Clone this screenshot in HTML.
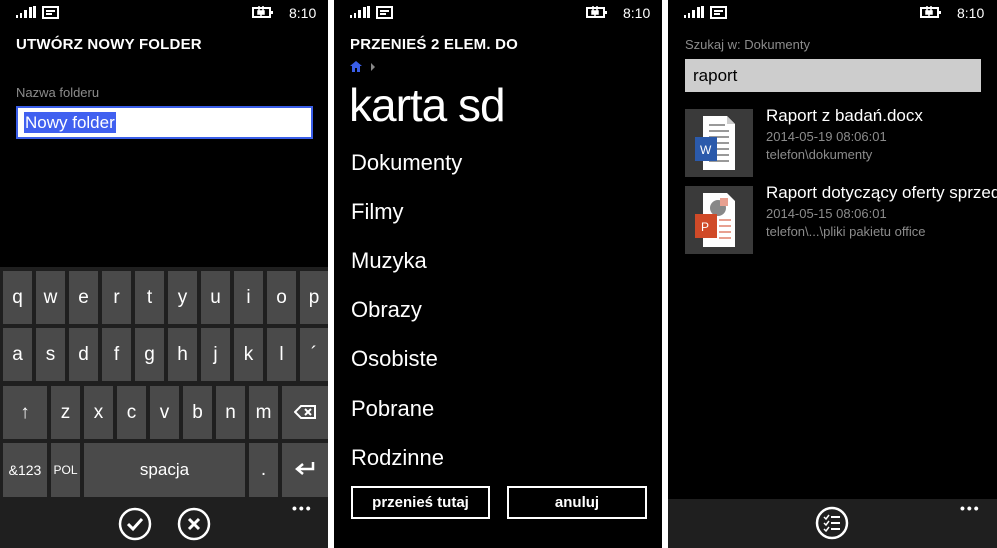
<!DOCTYPE html>
<html><head><meta charset="utf-8"><style>
*{margin:0;padding:0;box-sizing:border-box}
body{width:997px;height:548px;background:#fff;position:relative;overflow:hidden;font-family:"Liberation Sans",sans-serif;color:#fff}
.p{position:absolute;top:0;height:548px;background:#000;overflow:hidden}
.a{position:absolute}
.t{font-size:14px;color:#fff}
.k{position:absolute;background:#4a4a4a;color:#fff;font-size:19px;text-align:center}
.hdr{font-size:15px;font-weight:bold;letter-spacing:.2px}
.li{position:absolute;left:17px;font-size:22px;color:#fff}
.btn{position:absolute;border:2px solid #fff;font-size:15px;font-weight:bold;display:flex;align-items:center;justify-content:center}
.dots{position:absolute;left:292px;top:500px;font-size:14px;letter-spacing:2px;font-weight:bold}
</style></head><body>

<div class="p" style="left:0;width:328px">
 <svg class="a" style="left:16px;top:6px" width="70" height="14"><rect x="0" y="9" width="2" height="3" fill="#fff"/><rect x="4" y="7" width="2" height="5" fill="#fff"/><rect x="8" y="4" width="3" height="8" fill="#fff"/><rect x="13" y="1" width="3" height="11" fill="#fff"/><rect x="17" y="0" width="3" height="12" fill="#fff"/><rect x="27" y="1" width="15" height="11" fill="none" stroke="#fff" stroke-width="2"/><rect x="30" y="4" width="9" height="2" fill="#fff"/><rect x="30" y="7" width="6" height="2" fill="#fff"/></svg>
 <svg class="a" style="left:252px;top:6px" width="22" height="12"><rect x="1" y="2" width="17" height="9" fill="none" stroke="#fff" stroke-width="2"/><rect x="19" y="5" width="2" height="3" fill="#fff"/><path d="M7 0v5M11 0v5M6 5h6v3h-6zM9 8v4" stroke="#fff" stroke-width="1.5" fill="#fff"/></svg>
 <div class="a t" style="left:289px;top:5px">8:10</div>
 <div class="a hdr" style="left:16px;top:36px">UTWÓRZ NOWY FOLDER</div>
 <div class="a" style="left:16px;top:85px;font-size:13px;color:#8c8c8c">Nazwa folderu</div>
 <div class="a" style="left:16px;top:106px;width:297px;height:33px;background:#fff;border:2px solid #3a5ee8"></div>
 <div class="a" style="left:24px;top:112px;height:21px;background:#4060f0;color:#fff;font-size:17px;line-height:21px;padding:0 1px">Nowy folder</div>
 <div class="a" style="left:0;top:267px;width:328px;height:281px;background:#1f1f1f"></div>
 <div class="k" style="left:3px;top:271px;width:29px;height:53px;line-height:53px">q</div>
 <div class="k" style="left:36px;top:271px;width:29px;height:53px;line-height:53px">w</div>
 <div class="k" style="left:69px;top:271px;width:29px;height:53px;line-height:53px">e</div>
 <div class="k" style="left:102px;top:271px;width:29px;height:53px;line-height:53px">r</div>
 <div class="k" style="left:135px;top:271px;width:29px;height:53px;line-height:53px">t</div>
 <div class="k" style="left:168px;top:271px;width:29px;height:53px;line-height:53px">y</div>
 <div class="k" style="left:201px;top:271px;width:29px;height:53px;line-height:53px">u</div>
 <div class="k" style="left:234px;top:271px;width:29px;height:53px;line-height:53px">i</div>
 <div class="k" style="left:267px;top:271px;width:29px;height:53px;line-height:53px">o</div>
 <div class="k" style="left:300px;top:271px;width:28px;height:53px;line-height:53px">p</div>
 <div class="k" style="left:3px;top:328px;width:29px;height:53px;line-height:53px">a</div>
 <div class="k" style="left:36px;top:328px;width:29px;height:53px;line-height:53px">s</div>
 <div class="k" style="left:69px;top:328px;width:29px;height:53px;line-height:53px">d</div>
 <div class="k" style="left:102px;top:328px;width:29px;height:53px;line-height:53px">f</div>
 <div class="k" style="left:135px;top:328px;width:29px;height:53px;line-height:53px">g</div>
 <div class="k" style="left:168px;top:328px;width:29px;height:53px;line-height:53px">h</div>
 <div class="k" style="left:201px;top:328px;width:29px;height:53px;line-height:53px">j</div>
 <div class="k" style="left:234px;top:328px;width:29px;height:53px;line-height:53px">k</div>
 <div class="k" style="left:267px;top:328px;width:29px;height:53px;line-height:53px">l</div>
 <div class="k" style="left:300px;top:328px;width:28px;height:53px;line-height:53px">´</div>
 <div class="k" style="left:3px;top:386px;width:44px;height:53px;line-height:53px">&#8593;</div>
 <div class="k" style="left:51px;top:386px;width:29px;height:53px;line-height:53px">z</div>
 <div class="k" style="left:84px;top:386px;width:29px;height:53px;line-height:53px">x</div>
 <div class="k" style="left:117px;top:386px;width:29px;height:53px;line-height:53px">c</div>
 <div class="k" style="left:150px;top:386px;width:29px;height:53px;line-height:53px">v</div>
 <div class="k" style="left:183px;top:386px;width:29px;height:53px;line-height:53px">b</div>
 <div class="k" style="left:216px;top:386px;width:29px;height:53px;line-height:53px">n</div>
 <div class="k" style="left:249px;top:386px;width:29px;height:53px;line-height:53px">m</div>
 <div class="k" style="left:282px;top:386px;width:46px;height:53px;line-height:53px"><svg width="22" height="14" style="vertical-align:-1px"><path d="M7 1h14v12H7L1 7z" fill="none" stroke="#fff" stroke-width="2"/><path d="M11 4l6 6M17 4l-6 6" stroke="#fff" stroke-width="2"/></svg></div>
 <div class="k" style="left:3px;top:443px;width:44px;height:54px;line-height:54px;font-size:14px">&amp;123</div>
 <div class="k" style="left:51px;top:443px;width:29px;height:54px;line-height:54px;font-size:12px">POL</div>
 <div class="k" style="left:84px;top:443px;width:161px;height:54px;line-height:54px;font-size:17px">spacja</div>
 <div class="k" style="left:249px;top:443px;width:29px;height:54px;line-height:54px">.</div>
 <div class="k" style="left:282px;top:443px;width:46px;height:54px;line-height:54px"><svg width="20" height="14" style="vertical-align:-1px"><path d="M18 0v7H3M8 2L2 7l6 5" fill="none" stroke="#fff" stroke-width="2.5"/></svg></div>
 <svg class="a" style="left:118px;top:507px" width="96" height="34"><circle cx="17" cy="17" r="15" fill="none" stroke="#fff" stroke-width="2.5"/><path d="M10 17l5 5 9-10" fill="none" stroke="#fff" stroke-width="3"/><circle cx="76" cy="17" r="15" fill="none" stroke="#fff" stroke-width="2.5"/><path d="M71 12l10 10M81 12l-10 10" stroke="#fff" stroke-width="3"/></svg>
 <div class="dots">•••</div>
</div>

<div class="p" style="left:334px;width:328px">
 <svg class="a" style="left:16px;top:6px" width="70" height="14"><rect x="0" y="9" width="2" height="3" fill="#fff"/><rect x="4" y="7" width="2" height="5" fill="#fff"/><rect x="8" y="4" width="3" height="8" fill="#fff"/><rect x="13" y="1" width="3" height="11" fill="#fff"/><rect x="17" y="0" width="3" height="12" fill="#fff"/><rect x="27" y="1" width="15" height="11" fill="none" stroke="#fff" stroke-width="2"/><rect x="30" y="4" width="9" height="2" fill="#fff"/><rect x="30" y="7" width="6" height="2" fill="#fff"/></svg>
 <svg class="a" style="left:252px;top:6px" width="22" height="12"><rect x="1" y="2" width="17" height="9" fill="none" stroke="#fff" stroke-width="2"/><rect x="19" y="5" width="2" height="3" fill="#fff"/><path d="M7 0v5M11 0v5M6 5h6v3h-6zM9 8v4" stroke="#fff" stroke-width="1.5" fill="#fff"/></svg>
 <div class="a t" style="left:289px;top:5px">8:10</div>
 <div class="a hdr" style="left:16px;top:36px">PRZENIEŚ 2 ELEM. DO</div>
 <svg class="a" style="left:15px;top:60px" width="32" height="14"><path d="M1 6L7 1l6 5h-2v6H3V6z" fill="#3a5ee8"/><rect x="6" y="8" width="2" height="4" fill="#000"/><path d="M22 3l4 4-4 4z" fill="#888"/></svg>
 <div class="a" style="left:15px;top:78px;font-size:46px;letter-spacing:-1px">karta sd</div>
 <div class="li" style="top:150px">Dokumenty</div>
 <div class="li" style="top:199px">Filmy</div>
 <div class="li" style="top:248px">Muzyka</div>
 <div class="li" style="top:297px">Obrazy</div>
 <div class="li" style="top:346px">Osobiste</div>
 <div class="li" style="top:396px">Pobrane</div>
 <div class="li" style="top:445px">Rodzinne</div>
 <div class="btn" style="left:17px;top:486px;width:139px;height:33px">przenieś tutaj</div>
 <div class="btn" style="left:173px;top:486px;width:140px;height:33px">anuluj</div>
</div>

<div class="p" style="left:668px;width:329px">
 <svg class="a" style="left:16px;top:6px" width="70" height="14"><rect x="0" y="9" width="2" height="3" fill="#fff"/><rect x="4" y="7" width="2" height="5" fill="#fff"/><rect x="8" y="4" width="3" height="8" fill="#fff"/><rect x="13" y="1" width="3" height="11" fill="#fff"/><rect x="17" y="0" width="3" height="12" fill="#fff"/><rect x="27" y="1" width="15" height="11" fill="none" stroke="#fff" stroke-width="2"/><rect x="30" y="4" width="9" height="2" fill="#fff"/><rect x="30" y="7" width="6" height="2" fill="#fff"/></svg>
 <svg class="a" style="left:252px;top:6px" width="22" height="12"><rect x="1" y="2" width="17" height="9" fill="none" stroke="#fff" stroke-width="2"/><rect x="19" y="5" width="2" height="3" fill="#fff"/><path d="M7 0v5M11 0v5M6 5h6v3h-6zM9 8v4" stroke="#fff" stroke-width="1.5" fill="#fff"/></svg>
 <div class="a t" style="left:289px;top:5px">8:10</div>
 <div class="a" style="left:17px;top:37px;font-size:13px;color:#8c8c8c">Szukaj w: Dokumenty</div>
 <div class="a" style="left:17px;top:59px;width:296px;height:33px;background:#cdcdcd;color:#000;font-size:17px;line-height:33px;padding-left:8px">raport</div>
 <div class="a" style="left:17px;top:109px;width:68px;height:68px;background:#3a3a3a"></div>
 <svg class="a" style="left:17px;top:109px" width="68" height="68"><path d="M18 7h24l8 8v46H18z" fill="#fff"/><path d="M42 7v8h8" fill="#ccc"/><g stroke="#999" stroke-width="2"><path d="M24 16h16M24 22h20M24 28h20M24 34h20M24 40h20M24 46h20M24 52h20"/></g><rect x="10" y="28" width="22" height="24" fill="#2b5aab"/><text x="15" y="45" font-size="12" fill="#fff" font-family="Liberation Sans">W</text></svg>
 <div class="a" style="left:98px;top:106px;font-size:17px">Raport z badań.docx</div>
 <div class="a" style="left:98px;top:129px;font-size:13px;color:#8c8c8c">2014-05-19 08:06:01</div>
 <div class="a" style="left:98px;top:147px;font-size:13px;color:#8c8c8c">telefon\dokumenty</div>
 <div class="a" style="left:17px;top:186px;width:68px;height:68px;background:#3a3a3a"></div>
 <svg class="a" style="left:17px;top:186px" width="68" height="68"><path d="M18 7h24l8 8v46H18z" fill="#fff"/><circle cx="33" cy="22" r="8" fill="#888"/><path d="M35 12h8v8h-8z" fill="#e8a090"/><g stroke="#e8a090" stroke-width="2"><path d="M34 34h12M34 40h12M34 46h12M34 52h12"/></g><rect x="10" y="28" width="22" height="24" fill="#d04a28"/><text x="16" y="45" font-size="12" fill="#fff" font-family="Liberation Sans">P</text></svg>
 <div class="a" style="left:98px;top:183px;font-size:17px;white-space:nowrap">Raport dotyczący oferty sprzedaży</div>
 <div class="a" style="left:98px;top:206px;font-size:13px;color:#8c8c8c">2014-05-15 08:06:01</div>
 <div class="a" style="left:98px;top:224px;font-size:13px;color:#8c8c8c">telefon\...\pliki pakietu office</div>
 <div class="a" style="left:0;top:499px;width:329px;height:49px;background:#1f1f1f"></div>
 <svg class="a" style="left:147px;top:506px" width="34" height="34"><circle cx="17" cy="17" r="15" fill="none" stroke="#fff" stroke-width="2.5"/><path d="M9 11l2 2 3-4M9 17l2 2 3-4M9 23l2 2 3-4" fill="none" stroke="#fff" stroke-width="1.5"/><path d="M16 11h9M16 17h9M16 23h9" stroke="#fff" stroke-width="2"/></svg>
 <div class="dots">•••</div>
</div>
</body></html>
